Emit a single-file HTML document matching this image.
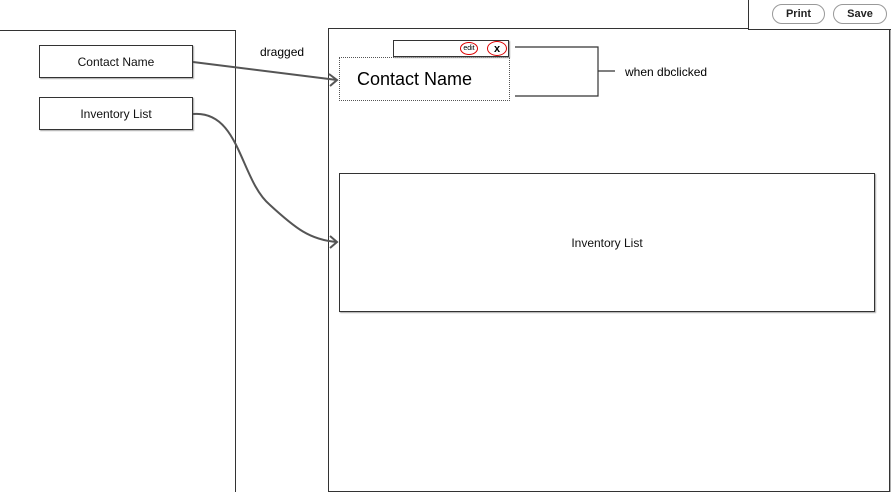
<!DOCTYPE html>
<html style="overflow:hidden;height:492px"><head><style>
body{margin:0;width:891px;height:492px;background:#fff;position:relative;overflow:hidden;font-family:"Liberation Sans",sans-serif;}
.a{position:absolute;box-sizing:border-box;}
.box{border:1px solid #333;box-shadow:1px 1px 1px #aaa;background:#fff;display:flex;align-items:center;justify-content:center;font-size:12px;color:#111;}
.btn{position:absolute;border:1px solid #999;border-radius:10px;height:18px;top:4px;font-size:11px;font-weight:bold;display:flex;align-items:center;justify-content:center;color:#222;}
</style></head><body>
<div class="a" style="left:-2px;top:30px;width:238px;height:475px;border:1px solid #333;"></div>
<div class="a" style="left:328px;top:28px;width:562px;height:464px;border:1px solid #333;box-shadow:1px 1px 1px #999"></div>
<div class="a" style="left:748px;top:-2px;width:150px;height:32px;border:1px solid #333;background:#fff"></div>
<div class="btn" style="left:772px;width:51px;">Print</div>
<div class="btn" style="left:833px;width:52px;">Save</div>
<div class="a box" style="left:39px;top:45px;width:154px;height:33px;">Contact Name</div>
<div class="a box" style="left:39px;top:97px;width:154px;height:33px;">Inventory List</div>
<div class="a box" style="left:339px;top:173px;width:536px;height:139px;">Inventory List</div>
<div class="a" style="left:339px;top:57px;width:171px;height:44px;border:1px dotted #555;font-size:18px;padding:11px 0 0 17px;color:#000">Contact Name</div>
<div class="a" style="left:393px;top:40px;width:116px;height:17px;border:1px solid #333;box-shadow:1px 1px 1px #999;background:#fff"></div>
<div class="a" style="left:460px;top:42px;width:18px;height:13px;border:1px solid #d00;border-radius:50%;font-size:7px;text-align:center;line-height:12px">edit</div>
<div class="a" style="left:487px;top:41px;width:20px;height:15px;border:1px solid #d00;border-radius:50%;font-size:11px;font-weight:bold;text-align:center;line-height:14px">x</div>
<div class="a" style="left:260px;top:45px;font-size:12px">dragged</div>
<div class="a" style="left:625px;top:65px;font-size:12px">when dbclicked</div>
<svg class="a" style="left:0;top:0" width="891" height="492">
<g fill="none" stroke="#555" stroke-width="2">
<path d="M193 62 L337 80"/><path d="M329 74 L337 80 L330 86"/>
<path d="M193 114 C240 110,240 180,270 205 C295 228,310 240,337 242"/><path d="M330 236 L337 242 L330 248"/>
</g>
<g fill="none" stroke="#333" stroke-width="1.2">
<path d="M515 47 H598 V96 H515"/><path d="M598 71 H615"/>
</g>
</svg>
</body></html>
